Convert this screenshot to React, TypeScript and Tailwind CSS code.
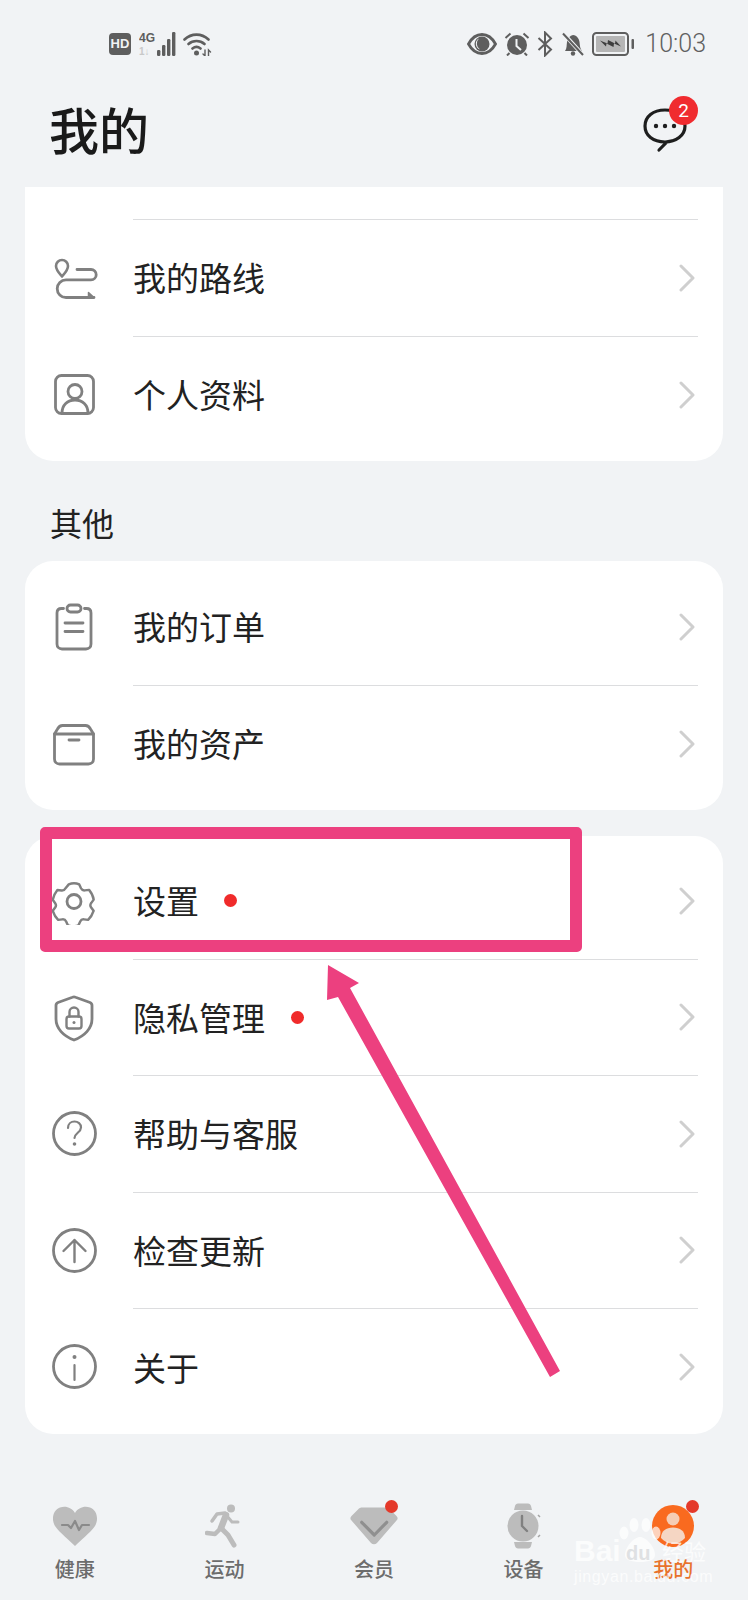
import React from "react";

const cjk = { fontFamily: '"Noto Sans CJK SC", "Noto Sans", sans-serif' };

function Ico({ children }: { children: React.ReactNode }) {
  return (
    <svg width="48" height="48" viewBox="0 0 48 48" fill="none" stroke="#808080" strokeWidth="2.800" strokeLinecap="round" strokeLinejoin="round" className="shrink-0">
      {children}
    </svg>
  );
}

const RouteI = () => (
  <Ico>
    <path d="M12 22.500c-3-3.500-6-6.500-6-10.500a6 6 0 0 1 12 0c0 4-3 7-6 10.500z" strokeWidth="2.600" />
    <path d="M27 15.500h14a5.200 5.200 0 0 1 0 10.400H16a8.800 8.800 0 0 0 0 17.600h28" />
    <path d="M38.500 38.500L44 43.500h-5.500z" fill="#808080" strokeWidth="1.500" />
  </Ico>
);
const UserI = () => (
  <Ico>
    <rect x="5.500" y="4.500" width="38" height="38" rx="6" />
    <circle cx="25" cy="20.500" r="7" />
    <path d="M12 42c0-8 5.500-13 13-13s13 5 13 13" />
  </Ico>
);
const ClipI = () => (
  <Ico>
    <path d="M13.500 5.500h-2C8.500 5.500 7 7.500 7 10v31c0 3 2 5 5 5h24c3 0 5-2 5-5V10c0-2.500-1.500-4.500-4.500-4.500h-2" />
    <rect x="17" y="2" width="14" height="7" rx="3.500" />
    <path d="M15 20h18M15 28.500h18" />
  </Ico>
);
const BoxI = () => (
  <Ico>
    <path d="M4.500 14l3-5c1-2 2.500-3.500 5-3.500h23c2.500 0 4 1.500 5 3.500l3 5" />
    <path d="M4.500 14h39v25c0 3-2 5-5 5h-29c-3 0-5-2-5-5z" />
    <path d="M19 20h10" />
  </Ico>
);
const GearI = () => (
  <Ico>
    <path d="M18 5.500c3.500-1.600 8.500-1.600 12 0l2 4.500c.8 1.600 2.500 2.600 4.300 2.400l4.900-.6c2.300 3 4.800 7.400 5.300 11.200l-2.900 4-.1.100c-1 1.500-1 3.400.1 4.900l2.800 3.900c-1.200 3.700-3.600 7.800-6.300 10.400l-4.700-.6c-1.800-.2-3.500.7-4.300 2.400l-2 4.400c-3.500 1.400-8.600 1.400-12.100 0l-2-4.400c-.8-1.700-2.500-2.600-4.300-2.400l-4.800.6c-2.700-2.600-5-6.800-6.200-10.400l2.800-3.900c1.100-1.500 1.100-3.400 0-4.900l-2.800-3.900c.6-3.800 3-8.300 5.300-11.200l4.800.6c1.800.2 3.500-.8 4.300-2.400z" transform="translate(3 2.600) scale(.875 .87)" />
    <circle cx="24" cy="24.500" r="7" />
  </Ico>
);
const ShieldI = () => (
  <Ico>
    <path d="M22.500 3.200c1-.4 2-.4 3 0L40 8.500c1.200.5 2 1.500 2 3V25c0 9.500-7.500 17-18 21C13.500 42 6 34.500 6 25V11.500c0-1.500.8-2.500 2-3z" />
    <rect x="16.500" y="22.500" width="15" height="12" rx="2.500" strokeWidth="2.400" />
    <path d="M19.500 22.500v-4.500a4.500 4.500 0 0 1 9 0v4.500" strokeWidth="2.400" />
    <circle cx="24" cy="28.500" r="1.500" fill="#808080" stroke="none" />
  </Ico>
);
const HelpI = () => (
  <Ico>
    <circle cx="24.500" cy="23.500" r="21" />
    <path d="M18 18c0-4 3-6.500 6.500-6.500S31 14 31 17.500c0 5-6.500 5.500-6.500 10.500" strokeWidth="2.200" />
    <circle cx="24.500" cy="34" r="1.800" fill="#808080" stroke="none" />
  </Ico>
);
const UpI = () => (
  <Ico>
    <circle cx="24.500" cy="23.500" r="21" />
    <path d="M24.500 35V13M13.500 24l11-11 11 11" strokeWidth="2.400" />
  </Ico>
);
const InfoI = () => (
  <Ico>
    <circle cx="24.500" cy="23.500" r="21" />
    <circle cx="24.500" cy="14" r="2" fill="#808080" stroke="none" />
    <path d="M24.500 22v15" strokeWidth="2.200" />
  </Ico>
);

function Row({ icon, label, dot, last, dotClass }: { icon: React.ReactNode; label: string; dot?: boolean; last?: boolean; dotClass?: string }) {
  return (
    <div className="flex h-[116.5px] items-center pl-[25px] pr-[25px]">
      <div className="flex w-[83px] shrink-0 items-center">{icon}</div>
      <div className={`flex h-full flex-1 items-center border-[#dcdddf] ${last ? "" : "border-b"}`}>
        <span className="text-[33px] leading-none text-[#222222]" style={cjk}>{label}</span>
        {dot && <span className={`h-[13px] w-[13px] rounded-full bg-[#f02b2b] ${dotClass}`} />}
        <svg width="16" height="28" viewBox="0 0 16 28" fill="none" stroke="#cfcfcf" strokeWidth="3" strokeLinecap="round" strokeLinejoin="round" className="ml-auto mr-[3px]">
          <path d="M2 2l12 12L2 26" />
        </svg>
      </div>
    </div>
  );
}

function Tab({ label, children, active }: { label: string; children: React.ReactNode; active?: boolean }) {
  return (
    <div className="flex flex-col items-center">
      <div className="relative flex h-[48px] w-[60px] items-center justify-center">{children}</div>
      <span className={`mt-[6px] text-[20px] leading-[26px] font-medium ${active ? "text-[#e8722c]" : "text-[#6c6c6c]"}`} style={cjk}>{label}</span>
    </div>
  );
}

const RedDot = ({ cls }: { cls: string }) => <span className={`absolute h-[13px] w-[13px] rounded-full bg-[#e4392a] ${cls}`} />;

export default function App() {
  return (
    <div className="relative h-[1600px] w-[748px] overflow-hidden bg-[#f1f3f5]">
      {/* status bar */}
      <div className="flex h-[70px] items-center justify-between pl-[109px] pr-[42px] pt-[17px] text-[#5e5e5e]">
        <div className="flex items-center">
          <span className="mr-[8px] flex h-[22px] w-[22px] items-center justify-center rounded-[4px] bg-[#5e5e5e] text-[13px] font-bold leading-none text-[#f1f3f5]" style={{ fontFamily: '"Liberation Sans", sans-serif' }}>HD</span>
          <svg width="38" height="24" viewBox="0 0 38 24" className="mr-[6px]">
            <text x="0" y="10" fontSize="12" fontWeight="700" fill="#5e5e5e" fontFamily="Liberation Sans, sans-serif">4G</text>
            <text x="0" y="22.500" fontSize="10" fontWeight="700" fill="#c8c8c8" fontFamily="Liberation Sans, sans-serif">1↓</text>
            <rect x="18" y="18" width="3.400" height="6" rx="1.200" fill="#5e5e5e" />
            <rect x="23" y="13" width="3.400" height="11" rx="1.200" fill="#5e5e5e" />
            <rect x="28" y="7" width="3.400" height="17" rx="1.200" fill="#5e5e5e" />
            <rect x="33" y="0" width="3.400" height="24" rx="1.200" fill="#5e5e5e" />
          </svg>
          <svg width="29" height="24" viewBox="0 0 29 24" fill="none" stroke="#5e5e5e" strokeWidth="2.600" strokeLinecap="round">
            <path d="M1.500 7.500c7-6.500 17-6.500 24 0M5.500 12c4.500-4 11.500-4 16 0M9.500 16.500c2.500-2 5.500-2 8 0" />
            <circle cx="13.500" cy="21" r="2.500" fill="#5e5e5e" stroke="none" />
            <path d="M22 18v6l-2-2M25.500 24v-6l2 2" strokeWidth="1.400" />
          </svg>
        </div>
        <div className="flex items-center">
          <svg width="30" height="22" viewBox="0 0 30 22" className="mr-[7px]">
            <path d="M1.500 11C5 4.500 10 1.500 15 1.500S25 4.500 28.500 11C25 17.500 20 20.500 15 20.500S5 17.500 1.500 11z" fill="none" stroke="#5e5e5e" strokeWidth="2.800" />
            <circle cx="15" cy="11" r="7.500" fill="#5e5e5e" />
            <path d="M12 5.500a7 7 0 0 0 1 11 6 6 0 0 1-1-11z" fill="#f1f3f5" />
          </svg>
          <svg width="26" height="24" viewBox="0 0 26 24" className="mr-[7px]">
            <circle cx="13" cy="13" r="10" fill="#5e5e5e" />
            <path d="M12.500 7v7l4.500 4" fill="none" stroke="#f1f3f5" strokeWidth="2" />
            <path d="M1.500 6L6.500 1.500M24.500 6L19.500 1.500M5.500 21L3 23.500M20.500 21L23 23.500" stroke="#5e5e5e" strokeWidth="2" />
          </svg>
          <svg width="16" height="26" viewBox="0 0 16 26" fill="none" stroke="#5e5e5e" strokeWidth="2" className="mr-[8px]">
            <path d="M1.500 7L14 18.500 8 24.500V1.500L14 7.500 1.500 19" />
          </svg>
          <svg width="24" height="24" viewBox="0 0 24 24" className="mr-[7px]">
            <path d="M4 19c2-2.500 1.500-6 2-9 .7-4 3-6.500 6-7 4 .5 6 3.500 6.500 7 .4 3.500.5 6.500 2.500 9z" fill="#5e5e5e" />
            <circle cx="12" cy="21.500" r="2.200" fill="#5e5e5e" />
            <path d="M2.500 1.500L22 23" stroke="#f1f3f5" strokeWidth="4" />
            <path d="M2 1.500L22 23" stroke="#5e5e5e" strokeWidth="2" />
          </svg>
          <svg width="42" height="24" viewBox="0 0 42 24" className="mr-[11px]">
            <rect x="1" y="1" width="35" height="22" rx="3.500" fill="none" stroke="#5e5e5e" strokeWidth="2" />
            <rect x="4" y="4" width="29" height="16" rx="1" fill="#b5b5b5" />
            <path d="M8 8.500l7.500 3 .5-3.500 7 3.500.5-3 5.500 6-7-3-.5 3.500-7-3.500-.5 3z" fill="#3e3e3e" />
            <rect x="39.500" y="7" width="2.500" height="10" rx="1" fill="#5e5e5e" />
          </svg>
          <span className="text-[25px] leading-none text-[#606060]" style={{ fontFamily: '"Roboto", sans-serif', fontWeight: 300 }}>10:03</span>
        </div>
      </div>

      {/* header */}
      <div className="flex h-[117px] items-start justify-between pl-[49px] pr-[47px]">
        <h1 className="mt-[32px] text-[50px] font-medium leading-[52px] text-[#1a1a1a]" style={cjk}>我的</h1>
        <div className="relative mt-[26px] h-[54px] w-[60px]">
          <svg width="48" height="46" viewBox="0 0 48 46" fill="none" stroke="#1e1e1e" strokeWidth="3.200" strokeLinecap="round" className="absolute left-0 top-[12px]">
            <path d="M24 2C12 2 4 8.500 4 18s8 16 20 16c.800 0 1.500 0 2-.100L18 42M24 34c11 0 20-6.500 20-16S36 2 24 2" />
            <circle cx="15" cy="18" r="2.200" fill="#1e1e1e" stroke="none" />
            <circle cx="24" cy="18" r="2.200" fill="#1e1e1e" stroke="none" />
            <circle cx="33" cy="18" r="2.200" fill="#1e1e1e" stroke="none" />
          </svg>
          <span className="absolute left-[28px] top-0 flex h-[29px] w-[29px] items-center justify-center rounded-full bg-[#f02b2f] text-[19px] leading-none text-white" style={{ fontFamily: '"Roboto", sans-serif' }}>2</span>
        </div>
      </div>

      {/* card 1 */}
      <div className="mx-[25px] rounded-b-[28px] bg-white pb-[8px]">
        <div className="flex h-[33px] pl-[108px] pr-[25px]"><div className="flex-1 border-b border-[#dcdddf]" /></div>
        <Row icon={<RouteI />} label="我的路线" />
        <Row icon={<UserI />} label="个人资料" last />
      </div>

      {/* section */}
      <div className="flex h-[100px] items-start pl-[50px] pt-[42px]">
        <span className="text-[32px] leading-[38px] text-[#222222]" style={cjk}>其他</span>
      </div>

      {/* card 2 */}
      <div className="mx-[25px] rounded-[28px] bg-white py-[8px]">
        <Row icon={<ClipI />} label="我的订单" />
        <Row icon={<BoxI />} label="我的资产" last />
      </div>

      {/* card 3 */}
      <div className="mx-[25px] mt-[26px] rounded-[28px] bg-white pt-[7px] pb-[8px]">
        <Row icon={<GearI />} label="设置" dot dotClass="ml-[25px]" />
        <Row icon={<ShieldI />} label="隐私管理" dot dotClass="ml-[26px]" />
        <Row icon={<HelpI />} label="帮助与客服" />
        <Row icon={<UpI />} label="检查更新" />
        <Row icon={<InfoI />} label="关于" last />
      </div>

      {/* tab bar */}
      <div className="absolute inset-x-0 bottom-0 grid h-[100px] grid-cols-5 pt-[2px]">
        <Tab label="健康">
          <svg width="46" height="42" viewBox="0 0 46 42">
            <path d="M23 41C18 36 8 28 3 21-1 14 1 5 8 2.500 14 .5 20 3 23 8 26 3 32 .5 38 2.500 45 5 47 14 43 21 38 28 28 36 23 41z" fill="#bcbcbc" />
            <path d="M10 20h6l3 3 4-7 4 9 3-5h7" fill="none" stroke="#8a8a8a" strokeWidth="2.200" strokeLinejoin="round" strokeLinecap="round" />
          </svg>
        </Tab>
        <Tab label="运动">
          <svg width="38" height="44" viewBox="0 0 38 44" fill="none" stroke="#bcbcbc" strokeLinecap="round" strokeLinejoin="round">
            <circle cx="26" cy="4.500" r="4" fill="#bcbcbc" stroke="none" />
            <path d="M21 11L16 24" strokeWidth="6.500" />
            <path d="M16 24l7 7 6 10" strokeWidth="5" />
            <path d="M15 25l-5 5-8-1" strokeWidth="4.500" />
            <path d="M22 12l5 6h6" strokeWidth="3" />
            <path d="M20 9l-8 1-5 7" strokeWidth="3.500" />
          </svg>
        </Tab>
        <Tab label="会员">
          <svg width="48" height="40" viewBox="0 0 48 40">
            <path d="M12 1.500h24c1.500 0 2.500.5 3.500 1.500l7 7c1.500 1.500 1.500 3 0 4.500L27 37c-1.700 1.800-4.300 1.800-6 0L1.500 14.500c-1.500-1.500-1.500-3 0-4.500l7-7c1-1 2-1.500 3.500-1.500z" fill="#bcbcbc" />
            <path d="M11.700 16.300L24.300 29 36.700 16.300" fill="none" stroke="#8f8f8f" strokeWidth="3.200" strokeLinecap="round" strokeLinejoin="round" />
          </svg>
          <RedDot cls="right-[5.500px] -top-[2px]" />
        </Tab>
        <Tab label="设备">
          <svg width="36" height="46" viewBox="0 0 36 46">
            <path d="M8 7l1-4c.4-1.500 1.500-2.500 3-2.500h10c1.500 0 2.600 1 3 2.500l1 4zM8 39l1 4c.4 1.500 1.500 2.500 3 2.500h10c1.500 0 2.600-1 3-2.500l1-4z" fill="#bcbcbc" />
            <circle cx="17" cy="23" r="15.500" fill="#bcbcbc" />
            <path d="M16 13v10l5 5" fill="none" stroke="#808080" strokeWidth="2.400" strokeLinecap="round" strokeLinejoin="round" />
            <path d="M32 12l2 2M32 34l2-2" stroke="#a5a5a5" strokeWidth="1.500" />
          </svg>
        </Tab>
        <Tab label="我的" active>
          <span className="flex h-[42px] w-[42px] items-center justify-center rounded-full bg-[#f96a1f]">
            <svg width="42" height="42" viewBox="0 0 42 42">
              <circle cx="21" cy="14" r="6.500" fill="#f5cdb5" />
              <path d="M9 33c0-7 5-10.500 12-10.500S33 26 33 33c-3 3.500-7 5.500-12 5.500S12 36.500 9 33z" fill="#f5d6c3" />
            </svg>
          </span>
          <RedDot cls="right-[4.500px] -top-[2px]" />
        </Tab>
      </div>

      {/* annotation: highlight box */}
      <div className="absolute left-[40px] top-[827px] h-[125px] w-[542px] rounded-[5px] border-[12px] border-[#ec407f]" />

      {/* annotation: arrow */}
      <svg width="748" height="1600" viewBox="0 0 748 1600" className="pointer-events-none absolute left-0 top-0">
        <path d="M328 965L359 983 350 988 560 1371 550 1377 338 997 327 1000z" fill="#ec407f" />
      </svg>

      {/* watermark */}
      <div className="pointer-events-none absolute left-[574px] top-[1518px] h-[66px] w-[136px] text-white/75">
        <svg width="42" height="45" viewBox="0 0 42 45" className="absolute left-[45px] top-0" fill="#ffffff" fillOpacity="0.7">
          <ellipse cx="5" cy="15" rx="4.500" ry="6.500" />
          <ellipse cx="15" cy="7" rx="4.500" ry="7" />
          <ellipse cx="27" cy="7" rx="4.500" ry="7" />
          <ellipse cx="37" cy="15" rx="4.500" ry="6.500" />
          <path d="M21 19c6 0 15 10 15 18 0 5-6 7-15 7s-15-2-15-7c0-8 9-18 15-18z" />
        </svg>
        <span className="absolute left-0 top-[18px] text-[30px] font-bold leading-[30px]" style={{ fontFamily: '"Liberation Sans", sans-serif' }}>Bai</span>
        <span className="absolute left-[52px] top-[24px] text-[20px] font-bold leading-[22px] text-[#dfe1e3]" style={{ fontFamily: '"Liberation Sans", sans-serif' }}>du</span>
        <span className="absolute left-[88px] top-[19px] text-[22px] leading-[26px]" style={cjk}>经验</span>
        <span className="absolute left-0 top-[50px] text-[16px] leading-[18px] tracking-[0.6px]" style={{ fontFamily: '"Liberation Sans", sans-serif' }}>jingyan.baidu.com</span>
      </div>
    </div>
  );
}
